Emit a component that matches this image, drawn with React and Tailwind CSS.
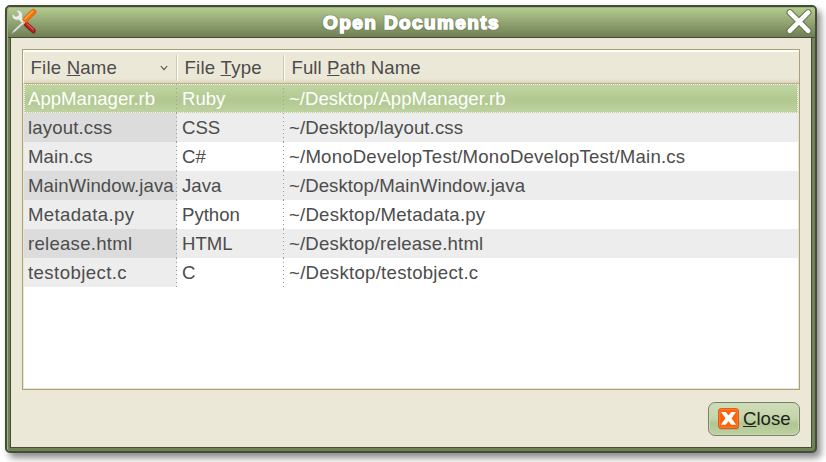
import React from "react";

const files = [
  ["AppManager.rb", "Ruby", "~/Desktop/AppManager.rb", "tracking-normal", "tracking-normal"],
  ["layout.css", "CSS", "~/Desktop/layout.css", "tracking-[0.15px]", "tracking-[0.1px]"],
  ["Main.cs", "C#", "~/MonoDevelopTest/MonoDevelopTest/Main.cs", "tracking-[0.1px]", "tracking-[0.2px]"],
  ["MainWindow.java", "Java", "~/Desktop/MainWindow.java", "tracking-[0.07px]", "tracking-[0.08px]"],
  ["Metadata.py", "Python", "~/Desktop/Metadata.py", "tracking-[0.37px]", "tracking-[0.22px]"],
  ["release.html", "HTML", "~/Desktop/release.html", "tracking-[0.25px]", "tracking-[0.17px]"],
  ["testobject.c", "C", "~/Desktop/testobject.c", "tracking-[0.42px]", "tracking-[0.27px]"],
];

const dots =
  "bg-[repeating-linear-gradient(to_bottom,#9c9c9c_0px,#9c9c9c_1px,transparent_1px,transparent_4px)]";

function ToolsIcon() {
  return (
    <svg className="absolute left-[2px] top-[1px]" width="28" height="28" viewBox="0 0 28 28">
      <defs>
        <linearGradient id="orange" x1="0" y1="0" x2="1" y2="1">
          <stop offset="0" stopColor="#ff9626" />
          <stop offset="1" stopColor="#df5c00" />
        </linearGradient>
      </defs>
      <path d="M15 16L24 24.2" stroke="#536043" strokeOpacity=".4" strokeWidth="4.5" strokeLinecap="round" />
      <path d="M2.2 6.6C1.6 10.4 5 13 8.6 11.8L14.2 17.2L17.2 14.2L12.2 9.2C13.4 5.4 11.2 2.2 7.2 2.2L6.4 3.2L8.8 5.6L8 7.8L5.4 8.4L3.2 6.2Z" fill="#eceeec" stroke="#a3aaa2" strokeWidth=".7" />
      <path d="M16.5 16.5L23.2 22.6" stroke="#8c1112" strokeWidth="4.8" strokeLinecap="round" />
      <path d="M16.5 16.1L23 22.1" stroke="#c32422" strokeWidth="3.2" strokeLinecap="round" />
      <path d="M17.3 15.9L23.2 21.4" stroke="#e38079" strokeWidth="1" strokeLinecap="round" />
      <path d="M12.6 14L3.8 22.2L1.4 25.8L5 23.5L14 15.2Z" fill="#f1f1ef" stroke="#9aa29b" strokeWidth=".6" />
      <path d="M12.4 11.2L21.2 2.3Q22.4 1 24.5 1.3Q26.6 2.6 26 4.8L16.4 14.6Q14 14.6 12.4 11.2Z" fill="url(#orange)" stroke="#d55f06" strokeWidth=".8" />
      <path d="M15 10.8L22.6 3.3" stroke="#ffb04f" strokeWidth="1.1" strokeLinecap="round" />
    </svg>
  );
}

function Titlebar() {
  return (
    <header className="relative h-[31px] shrink-0 border-b border-[#464b38] bg-linear-to-b from-[#b7cd92] to-[#707f54] shadow-[inset_0_1px_0_#9ab37a]">
      <ToolsIcon />
      <h1 className="flex h-[30px] items-center justify-center font-['Liberation_Sans',Arial,sans-serif] text-[19px] leading-none font-bold tracking-[1.4px] text-white [-webkit-text-stroke:1.6px_white] [text-shadow:1px_1px_1px_#617049,-1px_-1px_1px_#71835a,1px_-1px_1px_#71835a,-1px_1px_1px_#617049]">
        Open Documents
      </h1>
      <svg className="absolute top-[1px] right-[2px]" width="28" height="28" viewBox="0 0 28 28" aria-label="Close window">
        <path d="M4.8 4.4L23.2 22.8M23.2 4.4L4.8 22.8" stroke="#66754f" strokeWidth="6.6" strokeLinecap="round" />
        <path d="M4.8 4.4L23.2 22.8M23.2 4.4L4.8 22.8" stroke="white" strokeWidth="4.6" strokeLinecap="round" />
      </svg>
    </header>
  );
}

function Divider() {
  return <span className="mt-[3px] h-[26px] w-[2px] shrink-0 border-l border-[#d0c9ac] bg-white" />;
}

function TableHeader() {
  return (
    <div className="flex h-[34px] shrink-0 border-t-2 border-b border-t-white border-b-[#b9ad85] border-l border-l-white bg-linear-to-b from-[#ece8d8] from-85% to-[#ddd5bf]">
      <div className="flex h-[31px] w-[152px] items-center justify-between pr-[8px] pl-[6.5px]">
        <span className="tracking-[0.2px]">File <u>N</u>ame</span>
        <svg width="8" height="6" viewBox="0 0 8 6"><path d="M.8 1L4 4.7L7.2 1" fill="none" stroke="#4d4d4d" strokeWidth="1.1" /></svg>
      </div>
      <Divider />
      <div className="flex h-[31px] w-[105px] items-center pl-[6.5px]"><span className="tracking-[0.25px]">File <u>T</u>ype</span></div>
      <Divider />
      <div className="flex h-[31px] items-center pl-[6.5px]"><span className="tracking-[0.08px]">Full <u>P</u>ath Name</span></div>
    </div>
  );
}

function Row({ file, index }) {
  const selected = index === 0;
  const striped = index % 2 === 1;
  return (
    <div className={"relative flex h-[29px] shrink-0 items-stretch leading-[29px] " + (selected ? "bg-linear-to-b from-[#c2d6a3] via-[#b1c890] via-55% to-[#bfd3a1] text-white" : striped ? "bg-[#ededed]" : "bg-white")}>
      <div className={"w-[153px] pl-[4px] whitespace-nowrap " + file[3] + (selected ? "" : striped ? " bg-[#dcdcdc]" : " bg-[#ededed]")}>{file[0]}</div>
      <div className="w-[107px] pl-[5px]">{file[1]}</div>
      <div className={"flex-1 pl-[5px] " + file[4]}>{file[2]}</div>
      <span className={"absolute top-0 left-[152px] h-full w-px " + dots} />
      <span className={"absolute top-0 left-[259px] h-full w-px " + dots} />
      {selected && <span className="absolute inset-0 border border-dotted border-[#f1f5e9]" />}
    </div>
  );
}

function CloseIcon() {
  return (
    <svg width="22" height="22" viewBox="0 0 22 22">
      <rect x="1" y="1.5" width="20" height="20" rx="2" fill="#7f9468" opacity=".6" />
      <rect x=".7" y=".7" width="19.6" height="19.6" rx="2" fill="#fc6208" stroke="#dc4c09" />
      <rect x="1.7" y="1.7" width="17.6" height="17.6" rx="1" fill="none" stroke="#ff8038" />
      <path d="M3 4H7.8L10.5 7.4L13.3 4H18L13.6 10.3L18.1 16.7H13.2L10.5 13.2L7.8 16.7H2.9L7.5 10.3Z" fill="white" />
    </svg>
  );
}

export default function App() {
  return (
    <main className="h-[462px] w-[826px] overflow-hidden bg-white pt-[5px] pl-[5px] font-['Liberation_Sans',Arial,sans-serif] text-[18.6px] text-[#4c4c4c]">
      <section className="h-[448px] w-[812px] rounded-[5px] border-2 border-[#464c38] bg-[#6f8456] shadow-[4px_5px_7px_rgba(0,0,0,0.45)]">
        <div className="flex h-full flex-col overflow-hidden rounded-[3px] border-l border-[#9db481]">
          <Titlebar />
          <div className="mr-[3px] mb-[3px] ml-[2px] flex flex-1 flex-col border-x border-b border-[#464c38] bg-[#ece8d8] px-[11px] pt-[11px]">
            <div className="flex h-[341px] w-[778px] flex-col border border-[#aaa273] bg-white">
              <TableHeader />
              <div className="flex flex-1 flex-col border-r border-b border-l border-[#e7e5dc]">
                {files.map((file, index) => <Row key={file[0]} file={file} index={index} />)}
              </div>
            </div>
            <button className="mt-[12px] flex h-[34px] w-[92px] items-center self-end rounded-[7px] border border-[#75836a] bg-[linear-gradient(to_bottom,#d0deb9_0%,#c3d3a8_50%,#b1c692_64%,#bfd1a3_100%)] pl-[9px] text-[#20231b] shadow-[inset_0_0_0_1px_#cbd9b5]">
              <CloseIcon />
              <span className="ml-[3px]"><u>C</u>lose</span>
            </button>
          </div>
        </div>
      </section>
    </main>
  );
}
